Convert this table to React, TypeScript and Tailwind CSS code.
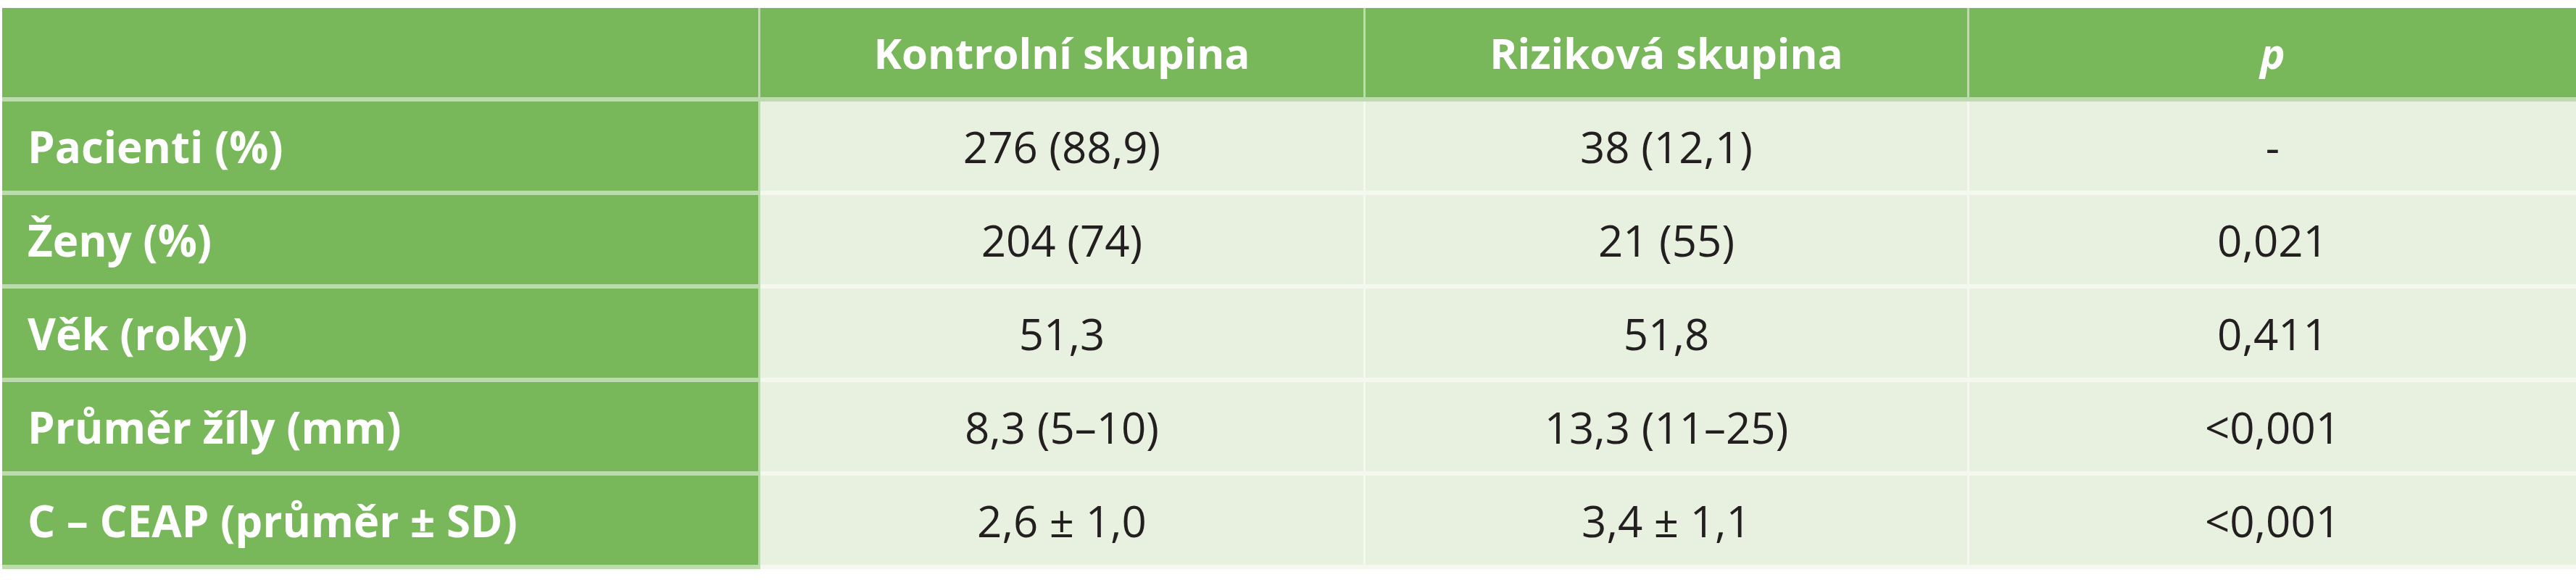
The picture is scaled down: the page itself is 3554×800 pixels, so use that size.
const header = ["", "Kontrolní skupina", "Riziková skupina", "p"]

const rows = [
  ["Pacienti (%)", "276 (88,9)", "38 (12,1)", "-"],
  ["Ženy (%)", "204 (74)", "21 (55)", "0,021"],
  ["Věk (roky)", "51,3", "51,8", "0,411"],
  ["Průměr žíly (mm)", "8,3 (5–10)", "13,3 (11–25)", "<0,001"],
  ["C – CEAP (průměr ± SD)", "2,6 ± 1,0", "3,4 ± 1,1", "<0,001"],
]

export default function App() {
  return (
    <div className="w-[3554px] h-[800px] bg-white pt-[11px] pl-[3px]" style={{ fontFamily: '"Open Sans", "Noto Sans", sans-serif' }}>
      <div className="grid grid-cols-[1046px_835px_833px_1fr] text-[60px] leading-none">
        {/* header */}
        {header.map((h, i) => (
          <div
            key={i}
            className={`h-[129px] bg-[#78b85a] border-b-[6px] border-white/50 flex items-center justify-center text-white font-bold text-[58px] ${
              i < 3 ? "border-r-[3px]" : ""
            }`}
          >
            {i === 3 ? <span className="italic">{h}</span> : h}
          </div>
        ))}

        {/* body */}
        {rows.map((row, r) =>
          row.map((cell, c) =>
            c === 0 ? (
              <div
                key={r + "-" + c}
                className="h-[129px] bg-[#78b85a] border-b-[6px] border-r-[3px] border-white/50 flex items-center pl-[35px] text-white font-bold"
              >
                {cell}
              </div>
            ) : (
              <div
                key={r + "-" + c}
                className={`h-[129px] bg-[#e8f1df] border-b-[6px] border-white/50 flex items-center justify-center text-[#231f20] ${
                  c < 3 ? "border-r-[3px]" : ""
                }`}
              >
                {cell}
              </div>
            )
          )
        )}
      </div>
    </div>
  )
}
